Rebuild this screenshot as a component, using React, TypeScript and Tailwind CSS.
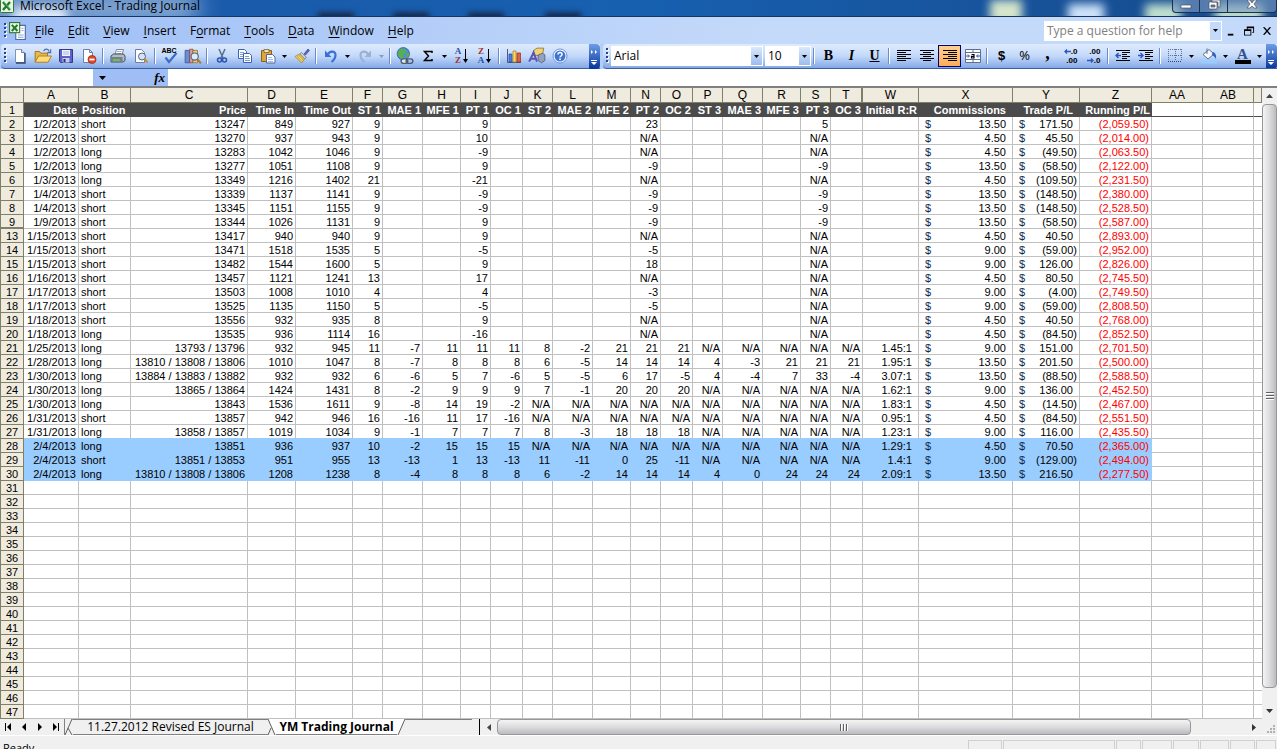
import type { ReactNode } from 'react';

import clsx from 'clsx';

type Entry = [
  row: number,
  date: string,
  position: string,
  price: string,
  timeIn: string,
  timeOut: string,
  stats: string,
  ratio: string,
  commission: string,
  trade: string,
  running: string,
];

const styles = {
  ui: "font-['Open_Sans','Noto_Sans',sans-serif]",
  sheet: "font-['Liberation_Sans',Arial,sans-serif]",
  headCell: 'border-r border-b border-[#808069] bg-[#efebde] p-0 font-normal',
  toolbar:
    'flex h-[25px] items-center border-b border-[#3b619c] bg-linear-to-b from-[#dfebfd] via-[#c3d9fa] to-[#84a8e6]',
  overflow:
    'flex h-[25px] w-[11px] shrink-0 flex-col items-center justify-end gap-1 rounded-r-sm bg-linear-to-b from-[#6f9de6] to-[#04349a] pb-[3px]',
  decimals:
    "flex flex-col items-end font-['Liberation_Sans',sans-serif] text-[8px] leading-[9px] font-bold",
} as const;

const COLUMNS = [
  { id: 'A', width: 'w-[55px]', title: 'Date' },
  { id: 'B', width: 'w-[52px]', title: 'Position' },
  { id: 'C', width: 'w-[117px]', title: 'Price' },
  { id: 'D', width: 'w-[48px]', title: 'Time In' },
  { id: 'E', width: 'w-[57px]', title: 'Time Out' },
  { id: 'F', width: 'w-[30px]', title: 'ST 1' },
  { id: 'G', width: 'w-[40px]', title: 'MAE 1' },
  { id: 'H', width: 'w-[38px]', title: 'MFE 1' },
  { id: 'I', width: 'w-[30px]', title: 'PT 1' },
  { id: 'J', width: 'w-[32px]', title: 'OC 1' },
  { id: 'K', width: 'w-[30px]', title: 'ST 2' },
  { id: 'L', width: 'w-[40px]', title: 'MAE 2' },
  { id: 'M', width: 'w-[38px]', title: 'MFE 2' },
  { id: 'N', width: 'w-[30px]', title: 'PT 2' },
  { id: 'O', width: 'w-[32px]', title: 'OC 2' },
  { id: 'P', width: 'w-[30px]', title: 'ST 3' },
  { id: 'Q', width: 'w-[40px]', title: 'MAE 3' },
  { id: 'R', width: 'w-[38px]', title: 'MFE 3' },
  { id: 'S', width: 'w-[30px]', title: 'PT 3' },
  { id: 'T', width: 'w-[32px]', title: 'OC 3' },
  { id: 'W', width: 'w-[56px]', title: 'Initial R:R' },
  { id: 'X', width: 'w-[94px]', title: 'Commissions' },
  { id: 'Y', width: 'w-[67px]', title: 'Trade P/L' },
  { id: 'Z', width: 'w-[72px]', title: 'Running P/L' },
  { id: 'AA', width: 'w-[51px]', title: '' },
  { id: 'AB', width: 'w-[51px]', title: '' },
  { id: '', width: 'w-auto', title: '' },
];

// stats holds columns F to T, a dot is an empty cell
const ENTRIES: Entry[] = [
  [2, '1/2/2013', 'short', '13247', '849', '927', '9 . . 9 . . . . 23 . . . . 5 .', '', '13.50', '171.50', '(2,059.50)'],
  [3, '1/2/2013', 'short', '13270', '937', '943', '9 . . 10 . . . . N/A . . . . N/A .', '', '4.50', '45.50', '(2,014.00)'],
  [4, '1/2/2013', 'long', '13283', '1042', '1046', '9 . . -9 . . . . N/A . . . . N/A .', '', '4.50', '(49.50)', '(2,063.50)'],
  [5, '1/2/2013', 'long', '13277', '1051', '1108', '9 . . 9 . . . . -9 . . . . -9 .', '', '13.50', '(58.50)', '(2,122.00)'],
  [6, '1/3/2013', 'long', '13349', '1216', '1402', '21 . . -21 . . . . N/A . . . . N/A .', '', '4.50', '(109.50)', '(2,231.50)'],
  [7, '1/4/2013', 'short', '13339', '1137', '1141', '9 . . -9 . . . . -9 . . . . -9 .', '', '13.50', '(148.50)', '(2,380.00)'],
  [8, '1/4/2013', 'short', '13345', '1151', '1155', '9 . . -9 . . . . -9 . . . . -9 .', '', '13.50', '(148.50)', '(2,528.50)'],
  [9, '1/9/2013', 'short', '13344', '1026', '1131', '9 . . 9 . . . . -9 . . . . -9 .', '', '13.50', '(58.50)', '(2,587.00)'],
  [13, '1/15/2013', 'short', '13417', '940', '940', '9 . . 9 . . . . N/A . . . . N/A .', '', '4.50', '40.50', '(2,893.00)'],
  [14, '1/15/2013', 'short', '13471', '1518', '1535', '5 . . -5 . . . . -5 . . . . N/A .', '', '9.00', '(59.00)', '(2,952.00)'],
  [15, '1/15/2013', 'short', '13482', '1544', '1600', '5 . . 9 . . . . 18 . . . . N/A .', '', '9.00', '126.00', '(2,826.00)'],
  [16, '1/16/2013', 'short', '13457', '1121', '1241', '13 . . 17 . . . . N/A . . . . N/A .', '', '4.50', '80.50', '(2,745.50)'],
  [17, '1/17/2013', 'short', '13503', '1008', '1010', '4 . . 4 . . . . -3 . . . . N/A .', '', '9.00', '(4.00)', '(2,749.50)'],
  [18, '1/17/2013', 'short', '13525', '1135', '1150', '5 . . -5 . . . . -5 . . . . N/A .', '', '9.00', '(59.00)', '(2,808.50)'],
  [19, '1/18/2013', 'short', '13556', '932', '935', '8 . . 9 . . . . N/A . . . . N/A .', '', '4.50', '40.50', '(2,768.00)'],
  [20, '1/18/2013', 'long', '13535', '936', '1114', '16 . . -16 . . . . N/A . . . . N/A .', '', '4.50', '(84.50)', '(2,852.50)'],
  [21, '1/25/2013', 'long', '13793 / 13796', '932', '945', '11 -7 11 11 11 8 -2 21 21 21 N/A N/A N/A N/A N/A', '1.45:1', '9.00', '151.00', '(2,701.50)'],
  [22, '1/28/2013', 'long', '13810 / 13808 / 13806', '1010', '1047', '8 -7 8 8 8 6 -5 14 14 14 4 -3 21 21 21', '1.95:1', '13.50', '201.50', '(2,500.00)'],
  [23, '1/30/2013', 'long', '13884 / 13883 / 13882', '932', '932', '6 -6 5 7 -6 5 -5 6 17 -5 4 -4 7 33 -4', '3.07:1', '13.50', '(88.50)', '(2,588.50)'],
  [24, '1/30/2013', 'long', '13865 / 13864', '1424', '1431', '8 -2 9 9 9 7 -1 20 20 20 N/A N/A N/A N/A N/A', '1.62:1', '9.00', '136.00', '(2,452.50)'],
  [25, '1/30/2013', 'long', '13843', '1536', '1611', '9 -8 14 19 -2 N/A N/A N/A N/A N/A N/A N/A N/A N/A N/A', '1.83:1', '4.50', '(14.50)', '(2,467.00)'],
  [26, '1/31/2013', 'short', '13857', '942', '946', '16 -16 11 17 -16 N/A N/A N/A N/A N/A N/A N/A N/A N/A N/A', '0.95:1', '4.50', '(84.50)', '(2,551.50)'],
  [27, '1/31/2013', 'long', '13858 / 13857', '1019', '1034', '9 -1 7 7 7 8 -3 18 18 18 N/A N/A N/A N/A N/A', '1.23:1', '9.00', '116.00', '(2,435.50)'],
  [28, '2/4/2013', 'long', '13851', '936', '937', '10 -2 15 15 15 N/A N/A N/A N/A N/A N/A N/A N/A N/A N/A', '1.29:1', '4.50', '70.50', '(2,365.00)'],
  [29, '2/4/2013', 'short', '13851 / 13853', '951', '955', '13 -13 1 13 -13 11 -11 0 25 -11 N/A N/A N/A N/A N/A', '1.4:1', '9.00', '(129.00)', '(2,494.00)'],
  [30, '2/4/2013', 'long', '13810 / 13808 / 13806', '1208', '1238', '8 -4 8 8 8 6 -2 14 14 14 4 0 24 24 24', '2.09:1', '13.50', '216.50', '(2,277.50)'],
];

const EMPTY_ROWS = Array.from({ length: 17 }, (_, i) => 31 + i);

const MENUS = [
  ['', 'F', 'ile'],
  ['', 'E', 'dit'],
  ['', 'V', 'iew'],
  ['', 'I', 'nsert'],
  ['F', 'o', 'rmat'],
  ['', 'T', 'ools'],
  ['', 'D', 'ata'],
  ['', 'W', 'indow'],
  ['', 'H', 'elp'],
];

function Icon({ children, size = 16 }: { children: ReactNode; size?: 16 | 18 }) {
  return (
    <svg viewBox="0 0 16 16" width={size} height={size} fill="none" aria-hidden="true">
      {children}
    </svg>
  );
}

function ToolButton({
  label,
  active,
  children,
}: {
  label: string;
  active?: boolean;
  children: ReactNode;
}) {
  return (
    <button
      type="button"
      aria-label={label}
      className={clsx(
        'flex h-[22px] w-[23px] shrink-0 items-center justify-center',
        active && 'border border-[#000080] bg-linear-to-b from-[#ffd091] to-[#ffac58]'
      )}
    >
      {children}
    </button>
  );
}

function Caret({ className = 'fill-black' }: { className?: string }) {
  return (
    <svg viewBox="0 0 5 3" width="5" height="3" className={className} aria-hidden="true">
      <path d="M0 0h5L2.500 3z" />
    </svg>
  );
}

function DropArrow({ label, disabled }: { label: string; disabled?: boolean }) {
  return (
    <button
      type="button"
      aria-label={label}
      disabled={disabled}
      className="flex h-[22px] w-[11px] shrink-0 items-center justify-center"
    >
      <Caret className={disabled ? 'fill-[#8a9ab8]' : 'fill-black'} />
    </button>
  );
}

function Separator() {
  return (
    <div className="flex w-[6px] shrink-0 justify-center">
      <div className="h-4 w-px bg-[#6a8ccb]" />
      <div className="h-4 w-px bg-white" />
    </div>
  );
}

function Grip() {
  return (
    <svg viewBox="0 0 4 16" width="4" height="16" className="shrink-0" aria-hidden="true">
      {[0, 4, 8, 12].map((y) => (
        <g key={y}>
          <rect x="1" y={y + 1} width="2" height="2" fill="#fff" />
          <rect x="0" y={y} width="2" height="2" fill="#27418a" />
        </g>
      ))}
    </svg>
  );
}

function Overflow() {
  return (
    <button type="button" aria-label="Toolbar options" className={styles.overflow}>
      <svg viewBox="0 0 7 16" width="7" height="16" fill="#fff" aria-hidden="true">
        <path d="M0 0l2 2-2 2zM4 0l2 2-2 2zM0 10h6v1H0zM0 12h6l-3 3z" />
      </svg>
    </button>
  );
}

function ExcelLogo() {
  return (
    <>
      <rect x="0.500" y="1.500" width="13" height="13" rx="1" fill="#e9f5e4" stroke="#2c7a2f" />
      <path d="M3 4l7 8M10 4l-7 8" stroke="#1f7a2a" strokeWidth="2.400" />
      <path d="M4 4l7 8" stroke="#8fd08c" strokeWidth="0.700" />
    </>
  );
}

function StandardToolbar() {
  return (
    <div className={clsx(styles.toolbar, 'w-[599px] shrink-0 rounded-l-sm pl-[3px]')}>
      <Grip />
      <ToolButton label="New">
        <Icon>
          <path d="M3.500 1.500h6l3 3v10h-9z" fill="#fff" stroke="#7f93bb" />
          <path d="M13 5v10H4" stroke="#33466e" strokeWidth="1.300" />
          <path d="M9.500 1.500v3h3" stroke="#6b7fa8" fill="#dbe6f8" />
        </Icon>
      </ToolButton>
      <ToolButton label="Open">
        <Icon size={18}>
          <path d="M1 4h4l1 1.500h6V13H1z" fill="#e8b84a" stroke="#9c6f17" strokeWidth="0.800" />
          <path d="M1 13.500L4 8h11.500L12.500 13.500z" fill="#ffdc78" stroke="#a87a1c" strokeWidth="0.800" />
          <path d="M8.500 3.500c1.500-2.500 4-2 5 .5M14.800 2v3h-3" stroke="#4a6da8" />
        </Icon>
      </ToolButton>
      <ToolButton label="Save">
        <Icon>
          <path d="M1.500 1.500h13v13h-12l-1-1z" fill="#5d62c8" stroke="#34388f" />
          <path d="M4 2h8v6H4z" fill="#eef2ff" />
          <path d="M5 4h6M5 6h6" stroke="#aab4dc" />
          <path d="M4.500 10h7v4.500h-7z" fill="#c7cbe8" />
          <path d="M5.500 11h2v3h-2z" fill="#2b2e80" />
        </Icon>
      </ToolButton>
      <ToolButton label="Permission">
        <Icon>
          <path d="M2.500 1.500h6l3 3v10h-9z" fill="#fff" stroke="#6b7fa8" />
          <path d="M8.500 1.500v3h3" stroke="#6b7fa8" />
          <circle cx="11" cy="11.500" r="4" fill="#e0492c" stroke="#a8260f" strokeWidth="0.800" />
          <path d="M8.500 11.500h5" stroke="#fff" strokeWidth="1.800" />
        </Icon>
      </ToolButton>
      <Separator />
      <ToolButton label="Print">
        <Icon>
          <path d="M5 7l1.500-5.500h7L12 7z" fill="#fff" stroke="#5d6b82" strokeWidth="0.800" />
          <path d="M7 3.500h4.500M6.500 5.500H11" stroke="#8aa0c8" strokeWidth="0.800" />
          <path d="M1 8l2.500-2h10l1.500 2v4.500l-2 1.500H1z" fill="#b4bcc6" stroke="#39434f" strokeWidth="0.900" />
          <path d="M1 9h11.500v4.500H1z" fill="#75808e" />
          <path d="M3 11h7v2H3z" fill="#6fc04a" />
        </Icon>
      </ToolButton>
      <ToolButton label="Print Preview">
        <Icon>
          <path d="M2.500 1.500h6l3 3v10h-9z" fill="#fff" stroke="#6b7fa8" />
          <circle cx="9" cy="8.500" r="3.500" fill="#cfe6fa" stroke="#53657f" />
          <path d="M11.500 11l3 3.500" stroke="#d08c2a" strokeWidth="2" />
        </Icon>
      </ToolButton>
      <Separator />
      <ToolButton label="Spelling">
        <span className="relative flex size-4">
          <span className="absolute -top-px left-0 font-['Liberation_Sans',sans-serif] text-[7px] leading-[8px] font-bold">
            ABC
          </span>
          <Icon>
            <path d="M3.500 9.500l3.500 4.500L14.500 5" stroke="#3c6cc8" strokeWidth="2.200" />
          </Icon>
        </span>
      </ToolButton>
      <ToolButton label="Research">
        <Icon size={18}>
          <path d="M1 3h4v11H1z" fill="#6a8ed6" stroke="#33518f" strokeWidth="0.700" />
          <path d="M5 2h3v12H5z" fill="#dba0a0" stroke="#8a4242" strokeWidth="0.700" />
          <path d="M8 3h4v11H8z" fill="#e6cf7a" stroke="#8a7434" strokeWidth="0.700" />
          <circle cx="9.500" cy="8.500" r="3.200" fill="#dcecfb" stroke="#53657f" />
          <path d="M12 11l3 3.500" stroke="#b87526" strokeWidth="1.800" />
        </Icon>
      </ToolButton>
      <Separator />
      <ToolButton label="Cut">
        <Icon>
          <path d="M5 1l4 9M11 1L7 10" stroke="#5a6e94" strokeWidth="1.500" />
          <circle cx="5.500" cy="12" r="2" stroke="#2c55b0" strokeWidth="1.500" />
          <circle cx="10.500" cy="12" r="2" stroke="#2c55b0" strokeWidth="1.500" />
        </Icon>
      </ToolButton>
      <ToolButton label="Copy">
        <Icon>
          <path d="M1.500 1.500h6l2 2v7h-8z" fill="#fff" stroke="#3f63ad" />
          <path d="M3 4.500h4M3 6.500h4M3 8.500h3" stroke="#7e9bd6" />
          <path d="M6.500 5.500h6l2 2v7h-8z" fill="#fff" stroke="#3f63ad" />
          <path d="M8 8.500h4M8 10.500h5M8 12.500h5" stroke="#7e9bd6" />
        </Icon>
      </ToolButton>
      <ToolButton label="Paste">
        <Icon>
          <path d="M1.500 2.500h10v11h-10z" fill="#e0a53a" stroke="#8f6014" />
          <path d="M4 1.500h5v3H4z" fill="#f5e6b0" stroke="#77643a" strokeWidth="0.800" />
          <path d="M6.500 6.500h6l2.500 2.500v6H6.500z" fill="#fff" stroke="#4d68a3" />
          <path d="M8 9.500h4M8 11.500h5M8 13.500h5" stroke="#8ca6d8" strokeWidth="0.800" />
        </Icon>
      </ToolButton>
      <DropArrow label="Paste options" />
      <ToolButton label="Format Painter">
        <Icon>
          <path d="M10 6l4-5 1.500 1.500L11.500 7z" fill="#5c6bc0" stroke="#38458f" strokeWidth="0.700" />
          <path d="M7.500 4.500l5 5-2 1.500-5-5z" fill="#c9ced8" stroke="#6a7080" strokeWidth="0.700" />
          <path d="M5.500 6l5 5-3 4L1 8.500z" fill="#f0d468" stroke="#9a7c22" strokeWidth="0.700" />
          <path d="M3 8l5 5.500M4.500 7l5 5" stroke="#b8923a" strokeWidth="0.700" />
        </Icon>
      </ToolButton>
      <Separator />
      <ToolButton label="Undo">
        <Icon>
          <path d="M2 2.500V9h6.500z" fill="#3c6fd4" />
          <path d="M4.500 7C6 3 12.500 2 12.500 7c0 3-1.500 5-4 7" stroke="#3c6fd4" strokeWidth="2.200" />
        </Icon>
      </ToolButton>
      <DropArrow label="Undo history" />
      <ToolButton label="Redo">
        <Icon>
          <path d="M14 2.500V9H7.500z" fill="#9cb1d6" />
          <path d="M11.500 7C10 3 3.500 2 3.500 7c0 3 1.500 5 4 7" stroke="#9cb1d6" strokeWidth="2.200" />
        </Icon>
      </ToolButton>
      <DropArrow label="Redo history" disabled />
      <Separator />
      <ToolButton label="Insert Hyperlink">
        <Icon size={18}>
          <circle cx="6.500" cy="6" r="5.500" fill="#4f8fd8" stroke="#2e5c9c" strokeWidth="0.700" />
          <path d="M3 2.500c2-1.500 5-1 6 .5L8 6 6 7l1 2.500-2.500 1C1.500 9 1 5 3 2.500zM9 6l2.500-1c.5 2-.5 4-2 5z" fill="#58b04a" />
          <rect x="4.500" y="10.500" width="6" height="4" rx="2" stroke="#4d5a70" strokeWidth="1.200" fill="#dfe6f0" />
          <rect x="9" y="10.500" width="6" height="4" rx="2" stroke="#4d5a70" strokeWidth="1.200" />
        </Icon>
      </ToolButton>
      <ToolButton label="AutoSum">
        <Icon>
          <path d="M12 5V3.500H4.500L8.500 8l-4 4.500H12V11" stroke="#000" strokeWidth="1.500" />
        </Icon>
      </ToolButton>
      <DropArrow label="AutoSum functions" />
      {[
        { label: 'Sort Ascending', top: 'A', bottom: 'Z' },
        { label: 'Sort Descending', top: 'Z', bottom: 'A' },
      ].map((sort) => (
        <ToolButton key={sort.label} label={sort.label}>
          <span className="flex w-2 flex-col font-['Liberation_Serif',serif] text-[9px] leading-[9px] font-bold">
            <span className={sort.top === 'A' ? 'text-[#2c4fa8]' : 'text-[#a33232]'}>{sort.top}</span>
            <span className={sort.top === 'A' ? 'text-[#a33232]' : 'text-[#2c4fa8]'}>{sort.bottom}</span>
          </span>
          <svg viewBox="0 0 7 16" width="7" height="16" aria-hidden="true">
            <path d="M3 1h1v10h2l-2.500 4L1 11h2z" />
          </svg>
        </ToolButton>
      ))}
      <Separator />
      <ToolButton label="Chart Wizard">
        <Icon>
          <path d="M1.500 1v13.500H15" stroke="#4b5b78" />
          <path d="M3 6h3v8H3z" fill="#4f7fe0" stroke="#2446a0" strokeWidth="0.700" />
          <path d="M7 3h3v11H7z" fill="#ffd75c" stroke="#a87a1c" strokeWidth="0.700" />
          <path d="M11 5h3.500v9H11z" fill="#e2603a" stroke="#952c10" strokeWidth="0.700" />
        </Icon>
      </ToolButton>
      <ToolButton label="Drawing">
        <Icon size={18}>
          <path d="M5 3l3-2h6l-1 5-3 1.500H4z" fill="#f2d274" stroke="#8c7020" strokeWidth="0.700" />
          <path d="M9 7l4-1.500L15 7v5l-3 2-3-2z" fill="#93a2ba" stroke="#4e5a70" strokeWidth="0.700" />
          <path d="M1 13L5 5l3 8M2.500 10.500h4.500" stroke="#5b55b8" strokeWidth="1.800" />
        </Icon>
      </ToolButton>
      <ToolButton label="Help">
        <Icon>
          <circle cx="8" cy="8" r="7" fill="#fff" stroke="#6a93d8" />
          <circle cx="8" cy="8" r="5.500" fill="#3f76d4" />
          <path d="M6 6.500c0-2.700 4-2.700 4 0 0 1.500-2 1.500-2 3" stroke="#fff" strokeWidth="1.500" />
          <rect x="7.200" y="10.500" width="1.600" height="1.600" fill="#fff" />
        </Icon>
      </ToolButton>
      <div className="flex-1" />
      <Overflow />
    </div>
  );
}

function Combo({ label, value, width }: { label: string; value: string; width: string }) {
  return (
    <div className={clsx('relative flex h-5 shrink-0 border border-white bg-white', width)}>
      <select
        aria-label={label}
        defaultValue={value}
        className="min-w-0 flex-1 appearance-none bg-white pr-3 pl-[2px] text-xs leading-4 outline-none"
      >
        <option>{value}</option>
      </select>
      <span className="pointer-events-none absolute inset-y-0 right-0 flex w-[11px] items-center justify-center bg-linear-to-b from-[#dbe8fb] to-[#9dbcee]">
        <Caret />
      </span>
    </div>
  );
}

function Lines({ d }: { d: string }) {
  return (
    <Icon>
      <path d={d} stroke="#000" />
    </Icon>
  );
}

function DecimalArrow({ d }: { d: string }) {
  return (
    <svg viewBox="0 0 7 5" width="7" height="5" fill="none" aria-hidden="true">
      <path d={d} stroke="#2c55c0" strokeWidth="1.300" />
    </svg>
  );
}

function FormattingToolbar() {
  return (
    <div className={clsx(styles.toolbar, 'min-w-0 flex-1 overflow-hidden rounded-l-sm pl-[3px]')}>
      <Grip />
      <div className="flex shrink-0 gap-[2px] pl-px">
        <Combo label="Font" value="Arial" width="w-[152px]" />
        <Combo label="Font size" value="10" width="w-[46px]" />
      </div>
      <Separator />
      <ToolButton label="Bold">
        <span className="font-['Liberation_Serif',serif] text-sm font-black">B</span>
      </ToolButton>
      <ToolButton label="Italic">
        <span className="font-['Liberation_Serif',serif] text-sm font-bold italic">I</span>
      </ToolButton>
      <ToolButton label="Underline">
        <span className="font-['Liberation_Serif',serif] text-sm font-bold underline">U</span>
      </ToolButton>
      <Separator />
      <ToolButton label="Align Left">
        <Lines d="M1 2.500h14M1 4.500h9M1 6.500h14M1 8.500h9M1 10.500h14M1 12.500h9" />
      </ToolButton>
      <ToolButton label="Center">
        <Lines d="M1 2.500h14M4 4.500h8M1 6.500h14M4 8.500h8M1 10.500h14M4 12.500h8" />
      </ToolButton>
      <ToolButton label="Align Right" active>
        <Lines d="M1 2.500h14M6 4.500h9M1 6.500h14M6 8.500h9M1 10.500h14M6 12.500h9" />
      </ToolButton>
      <ToolButton label="Merge and Center">
        <Icon>
          <path d="M0.500 1.500h15v13h-15z" fill="#fff" stroke="#5e6f90" />
          <path d="M0.500 4.500h15M0.500 11.500h15M8 1.500v3M8 11.500v3" stroke="#5e6f90" />
          <path d="M1 8h3M15 8h-3M3 6.500L4.500 8 3 9.500M13 6.500L11.500 8l1.500 1.500" stroke="#2a4fa8" />
          <path d="M6.500 6.500h2.500v3.500H6.500V8.300H9" stroke="#000" strokeWidth="1.200" />
        </Icon>
      </ToolButton>
      <Separator />
      <ToolButton label="Currency Style">
        <span className="font-['Liberation_Sans',sans-serif] text-[13px] font-bold">$</span>
      </ToolButton>
      <ToolButton label="Percent Style">
        <span className="text-[13px]">%</span>
      </ToolButton>
      <ToolButton label="Comma Style">
        <span className="self-start font-['Liberation_Serif',serif] text-lg leading-4 font-bold">,</span>
      </ToolButton>
      <ToolButton label="Increase Decimal">
        <span className={styles.decimals}>
          <span className="flex items-center">
            <DecimalArrow d="M7 2.500H1M3 0.500L1 2.500l2 2" />
            .0
          </span>
          <span>.00</span>
        </span>
      </ToolButton>
      <ToolButton label="Decrease Decimal">
        <span className={styles.decimals}>
          <span>.00</span>
          <span className="flex items-center">
            <DecimalArrow d="M0 2.500h6M4 0.500l2 2-2 2" />
            .0
          </span>
        </span>
      </ToolButton>
      <Separator />
      <ToolButton label="Decrease Indent">
        <Icon>
          <path d="M1 2.500h14M7 4.500h8M7 6.500h5M7 8.500h8M7 10.500h5M1 12.500h14" stroke="#000" />
          <path d="M6 7.500H1.500M3.500 5L1 7.500 3.500 10" stroke="#2c55c0" strokeWidth="1.400" />
        </Icon>
      </ToolButton>
      <ToolButton label="Increase Indent">
        <Icon>
          <path d="M1 2.500h14M7 4.500h8M7 6.500h5M7 8.500h8M7 10.500h5M1 12.500h14" stroke="#000" />
          <path d="M0 7.500h4.500M2.500 5L5 7.500 2.500 10" stroke="#2c55c0" strokeWidth="1.400" />
        </Icon>
      </ToolButton>
      <Separator />
      <ToolButton label="Borders">
        <Icon>
          <path
            d="M1 1.500h14M1 7.500h14M1.500 1v12M8.500 1v12M14.500 1v12"
            stroke="#5e6f90"
            strokeDasharray="1 1"
          />
          <path d="M1 13.500h14" stroke="#33415e" strokeDasharray="1 1" />
        </Icon>
      </ToolButton>
      <DropArrow label="Border styles" />
      <ToolButton label="Fill Color">
        <Icon>
          <path d="M2 6.500l6-5 5 4.500-6 5z" fill="#f4f7fc" stroke="#5e6f90" />
          <path d="M6 0.500v5.500" stroke="#5e6f90" />
          <path d="M11.500 4c3 .5 4 3 3.500 7-1-1-1.500-3-4-4z" fill="#2c62c4" />
          <path d="M0 12h16v3.500H0z" fill="#99ccff" />
        </Icon>
      </ToolButton>
      <DropArrow label="Fill colors" />
      <ToolButton label="Font Color">
        <span className="flex h-4 w-4 flex-col items-center border-b-4 border-black font-['Liberation_Serif',serif] text-[15px] leading-3 font-bold text-[#33508f]">
          A
        </span>
      </ToolButton>
      <DropArrow label="Font colors" />
      <div className="flex-1" />
      <Overflow />
    </div>
  );
}

function TitleBar() {
  return (
    <header className="relative flex h-[17px] shrink-0 items-start justify-between overflow-hidden border-b border-[#17365f] bg-linear-to-r from-[#1c58a8] via-[#1760b0] to-[#174a8c]">
      <div className="absolute -top-2 -left-6 h-8 w-56 rounded-full bg-[#a9c3e4]/80 blur-md" />
      <div className="absolute top-2 left-3 h-4 w-14 rounded-full bg-[#e4eefa] blur-[5px]" />
      <div className="absolute top-0 left-[990px] h-6 w-8 bg-[#d6e6cc] blur-[5px]" />
      <div className="absolute top-1 left-[1068px] h-5 w-9 bg-[#cfe4fa] blur-[5px]" />
      <div className="absolute top-1 left-[1145px] h-5 w-9 bg-[#bfe0cf] blur-[5px]" />
      <div className="absolute top-1 left-[1215px] h-5 w-12 bg-[#bcdccb] blur-[5px]" />
      {['left-[318px]', 'left-[393px]', 'left-[468px]', 'left-[545px]'].map((left) => (
        <div key={left} className={clsx('absolute top-[13px] h-2 w-9 bg-[#14213f] blur-[3px]', left)} />
      ))}
      <div className="relative flex items-start gap-1">
        <span className="-mt-[2px] block">
          <Icon>
            <ExcelLogo />
          </Icon>
        </span>
        <h1 className="text-xs leading-3">Microsoft Excel - Trading Journal</h1>
      </div>
      <div className="relative flex h-[13px] rounded-b border border-t-0 border-[#1b2f4e] bg-[#7d9cc4]/60">
        {[
          ['Minimize', 'M3 5h10v3H3z', 'w-[27px]'],
          ['Restore', 'M6 0h8v7h-2V2H6zM3 2h8v7H3zm2 3v2h4V5z', 'w-[28px]'],
          ['Close', 'M3 0h3l2 3 2-3h3l-3 4 3 4h-3L8 6 6 8H3l3-4z', 'w-[48px]'],
        ].map(([label, d, width]) => (
          <button
            key={label}
            type="button"
            aria-label={label}
            className={clsx(
              'flex items-start justify-center border-r border-[#1b2f4e] last:border-r-0',
              width
            )}
          >
            <svg viewBox="0 0 16 12" width="16" height="12" aria-hidden="true">
              <path d={d} fill="#fff" stroke="#4a4f5c" strokeWidth="0.700" fillRule="evenodd" />
            </svg>
          </button>
        ))}
      </div>
    </header>
  );
}

function MenuBar() {
  return (
    <div className="flex h-[27px] shrink-0 items-center bg-linear-to-r from-[#9ebef5] to-[#c4dafa] to-60% pr-1 pl-1">
      <Grip />
      <span className="ml-px">
        <Icon size={18}>
          <path d="M6 3h8.500v12.500H6z" fill="#fff" stroke="#4d68a3" />
          <path d="M8 11.500h5M8 13.500h5M11 5.500h2M11 7.500h2" stroke="#8ca6d8" />
          <rect x="0.500" y="0.500" width="9" height="9" fill="#e9f5e4" stroke="#2c7a2f" />
          <path d="M2.500 2.500l5 5.500M7.500 2.500l-5 5.500" stroke="#1f7a2a" strokeWidth="1.800" />
        </Icon>
      </span>
      <nav className="flex flex-1 gap-[14px] pl-2">
        {MENUS.map(([before, key, after]) => (
          <button key={key + after} type="button" className="text-xs leading-4">
            {before}
            <span className="underline underline-offset-2">{key}</span>
            {after}
          </button>
        ))}
      </nav>
      <div className="flex h-5 w-[178px] border border-white bg-white">
        <input
          type="text"
          aria-label="Type a question for help"
          placeholder="Type a question for help"
          className="min-w-0 flex-1 pl-[2px] text-xs leading-4 outline-none placeholder:text-[#808080]"
        />
        <button
          type="button"
          aria-label="Recent questions"
          className="flex w-[11px] items-center justify-center bg-[#c4dafa]"
        >
          <Caret />
        </button>
      </div>
      <div className="flex items-center gap-[7px] pl-1">
        {[
          ['Minimize workbook', 'M2 9h6v2H2z'],
          ['Restore workbook', 'M3 1h8v7H9V7h1V3H4v1H3zM0 4h8v7H0zm1 2v4h6V6z'],
          ['Close workbook', 'M1 2h2l2.500 3L8 2h2L6.500 6 10 10H8L5.500 7 3 10H1l3.500-4z'],
        ].map(([label, d]) => (
          <button key={label} type="button" aria-label={label}>
            <svg viewBox="0 0 12 12" width="11" height="12" aria-hidden="true">
              <path d={d} fillRule="evenodd" />
            </svg>
          </button>
        ))}
      </div>
    </div>
  );
}

function FormulaBar() {
  return (
    <div className="flex h-[17px] shrink-0 bg-white">
      <input type="text" aria-label="Name box" className="w-[93px] bg-white px-1 text-xs outline-none" />
      <div className="flex w-[75px] items-center justify-between bg-[#9ebef5] pr-[3px] pl-[6px]">
        <button type="button" aria-label="Named ranges">
          <svg viewBox="0 0 7 4" width="7" height="4" aria-hidden="true">
            <path d="M0 0h7L3.500 4z" />
          </svg>
        </button>
        <button
          type="button"
          aria-label="Insert function"
          className="font-['Liberation_Serif',serif] text-[13px] leading-4 font-bold italic"
        >
          fx
        </button>
      </div>
      <input type="text" aria-label="Formula" className="min-w-0 flex-1 bg-white px-1 text-xs outline-none" />
    </div>
  );
}

function Money({ value }: { value: string }) {
  return (
    <span className={clsx('flex justify-between pl-1', value.startsWith('(') ? '' : 'pr-1')}>
      <span className="text-[#0c2a52]">$</span>
      <span>{value}</span>
    </span>
  );
}

function RowNumber({ row }: { row: number }) {
  return (
    <th
      scope="row"
      className={clsx(
        styles.headCell,
        'h-[14px] border-l pt-px text-center',
        // rows 10 to 12 are hidden
        row === 9 && 'shadow-[inset_0_-1px_0_#808069]'
      )}
    >
      {row}
    </th>
  );
}

function EntryRow({ entry }: { entry: Entry }) {
  const [row, date, position, price, timeIn, timeOut, stats, ratio, commission, trade, running] =
    entry;
  const marked = row >= 28;
  const cells = [date, position, price, timeIn, timeOut, ...stats.split(' ')];
  const cell = clsx(
    'h-[14px] border-r border-b px-[2px] pt-px pb-0',
    marked ? 'border-[#99ccff] bg-[#99ccff]' : 'border-[#c0c0c0]',
    row === 27 && 'border-b-[#99ccff]'
  );
  const blank = 'border-r border-b border-[#c0c0c0] p-0';

  return (
    <tr>
      <RowNumber row={row} />
      {cells.map((value, i) => (
        <td key={COLUMNS[i].id} className={clsx(cell, i === 1 ? 'text-left' : 'text-right')}>
          {value === '.' ? '' : value}
        </td>
      ))}
      <td className={clsx(cell, 'text-right')}>
        <span className="pr-1">{ratio}</span>
      </td>
      <td className={cell}>
        <Money value={commission} />
      </td>
      <td className={cell}>
        <Money value={trade} />
      </td>
      <td className={clsx(cell, 'text-right text-[#ff0000]')}>{running}</td>
      <td className={blank} />
      <td className={blank} />
      <td className="border-b border-[#c0c0c0] p-0" />
    </tr>
  );
}

function Sheet() {
  return (
    <table
      className={clsx(
        styles.sheet,
        'w-full table-fixed border-separate border-spacing-0 bg-white text-[11px] leading-3 whitespace-nowrap'
      )}
    >
      <colgroup>
        <col className="w-[24px]" />
        {COLUMNS.map((column) => (
          <col key={column.id} className={column.width} />
        ))}
      </colgroup>
      <thead>
        <tr>
          <th className={clsx(styles.headCell, 'h-[15px] border-l')} />
          {COLUMNS.map((column) => (
            <th
              key={column.id}
              scope="col"
              className={clsx(
                styles.headCell,
                'h-[15px] text-xs leading-[14px]',
                column.id === 'T' && 'border-r-2'
              )}
            >
              {column.id}
            </th>
          ))}
        </tr>
      </thead>
      <tbody>
        <tr>
          <RowNumber row={1} />
          {COLUMNS.map((column) => (
            <td
              key={column.id}
              className={clsx(
                'h-[14px] border-b border-[#4b4b4b] pt-px pb-0 font-bold text-white',
                column.title ? 'bg-[#4b4b4b]' : 'border-r border-r-[#c0c0c0] last:border-r-0',
                column.id === 'B' ? 'pl-[3px] text-left' : 'pl-0 text-right',
                column.id === 'X' || column.id === 'Y' ? 'pr-[7px]' : 'pr-[2px]'
              )}
            >
              {column.title}
            </td>
          ))}
        </tr>
        {ENTRIES.map((entry) => (
          <EntryRow key={entry[0]} entry={entry} />
        ))}
        {EMPTY_ROWS.map((row) => (
          <tr key={row}>
            <RowNumber row={row} />
            {COLUMNS.map((column) => (
              <td
                key={column.id}
                className="h-[14px] border-r border-b border-[#c0c0c0] p-0 last:border-r-0"
              />
            ))}
          </tr>
        ))}
      </tbody>
    </table>
  );
}

function VerticalScrollbar() {
  return (
    <div className="flex w-[15px] shrink-0 flex-col bg-[#f0f0f0]">
      <button type="button" aria-label="Scroll up" className="flex h-4 items-center justify-center">
        <svg viewBox="0 0 7 4" width="7" height="4" aria-hidden="true">
          <path d="M0 4h7L3.500 0z" fill="#444" />
        </svg>
      </button>
      <div className="flex flex-1 flex-col items-center justify-center gap-px rounded-sm border border-[#979797] bg-linear-to-r from-[#f4f4f4] via-[#dcdcdf] to-[#bcbcc0]">
        {[0, 1, 2].map((i) => (
          <div key={i} className="h-[2px] w-2 border-b border-white bg-[#606060]" />
        ))}
      </div>
      <button
        type="button"
        aria-label="Scroll down"
        className="flex h-[31px] items-end justify-center pb-[6px]"
      >
        <svg viewBox="0 0 7 4" width="7" height="4" aria-hidden="true">
          <path d="M0 0h7L3.500 4z" fill="#333" />
        </svg>
      </button>
    </div>
  );
}

function SheetTabs() {
  return (
    <div className="flex h-[17px] shrink-0 border-b border-white bg-[#f0f0f0]">
      <div className="flex w-[65px] shrink-0 items-center border-r border-[#808080]">
        {[
          ['First sheet', 'M1 0h1v8H1zM7 0v8L3 4z'],
          ['Previous sheet', 'M6 0v8L2 4z'],
          ['Next sheet', 'M2 0v8l4-4z'],
          ['Last sheet', 'M1 0v8l4-4zM6 0h1v8H6z'],
        ].map(([label, d]) => (
          <button key={label} type="button" aria-label={label} className="flex flex-1 justify-center">
            <svg viewBox="0 0 8 8" width="8" height="8" aria-hidden="true">
              <path d={d} />
            </svg>
          </button>
        ))}
      </div>
      <div className="flex w-[407px] shrink-0">
        <svg viewBox="0 0 8 16" width="8" height="16" className="shrink-0" aria-hidden="true">
          <path d="M0 16L7 0h1M3 9l4 7" fill="none" stroke="#606060" />
        </svg>
        <button
          type="button"
          className="flex w-[195px] items-center justify-center border-y border-[#808080] text-xs leading-[14px]"
        >
          11.27.2012 Revised ES Journal
        </button>
        <svg viewBox="0 0 8 16" width="8" height="16" className="shrink-0" aria-hidden="true">
          <path d="M0 0h8v16H7z" fill="#fff" />
          <path d="M0 0l7 16M0 16l3-7" fill="none" stroke="#606060" />
        </svg>
        <button
          type="button"
          className="flex w-[121px] items-center justify-center border-b border-[#808080] bg-white text-xs leading-[14px] font-bold"
        >
          YM Trading Journal
        </button>
        <svg viewBox="0 0 8 16" width="8" height="16" className="shrink-0" aria-hidden="true">
          <path d="M0 0h8L1 16H0z" fill="#fff" />
          <path d="M1 16L8 0" stroke="#606060" />
        </svg>
        <div className="flex-1 border-t border-[#808080]" />
      </div>
      <div className="w-2 shrink-0 border-r border-black" />
      <button type="button" aria-label="Scroll left" className="flex w-[17px] items-center justify-center">
        <svg viewBox="0 0 4 7" width="4" height="7" aria-hidden="true">
          <path d="M4 0v7L0 3.500z" fill="#444" />
        </svg>
      </button>
      <div className="flex min-w-0 flex-1">
        <div className="flex min-w-0 flex-1 items-center justify-center gap-px rounded-sm border border-[#979797] bg-linear-to-b from-[#f4f4f4] via-[#dcdcdf] to-[#bcbcc0]">
          {[0, 1, 2].map((i) => (
            <div key={i} className="h-[7px] w-[2px] border-r border-white bg-[#606060]" />
          ))}
        </div>
        <button
          type="button"
          aria-label="Scroll right"
          className="flex w-[71px] items-center justify-end pr-[6px]"
        >
          <svg viewBox="0 0 4 7" width="4" height="7" aria-hidden="true">
            <path d="M0 0v7l4-3.500z" fill="#333" />
          </svg>
        </button>
      </div>
      <div className="flex w-[15px] items-end justify-end">
        <svg viewBox="0 0 12 12" width="12" height="12" fill="#b0b0b0" aria-hidden="true">
          <path d="M8 2h2v2H8zM5 5h2v2H5zM8 5h2v2H8zM2 8h2v2H2zM5 8h2v2H5zM8 8h2v2H8z" />
        </svg>
      </div>
    </div>
  );
}

function StatusBar() {
  return (
    <footer className="flex min-h-0 flex-1 justify-between overflow-hidden bg-[#f0f0f0] pt-1">
      <span className="pl-[3px] text-[11px] leading-4">Ready</span>
      <div className="flex gap-px pr-px">
        {[
          'w-[34px]',
          'w-[112px]',
          'w-[25px]',
          'w-[30px]',
          'w-[26px]',
          'w-[29px]',
          'w-[25px]',
          'w-[20px]',
        ].map((width, i) => (
          <div key={i} className={clsx('h-5 border border-[#d0d0d0]', width)} />
        ))}
      </div>
    </footer>
  );
}

export default function App() {
  return (
    <div className={clsx(styles.ui, 'flex h-screen flex-col overflow-hidden bg-white text-black')}>
      <TitleBar />
      <MenuBar />
      <div className="flex shrink-0 gap-[3px] bg-[#b4cef8] pl-px">
        <StandardToolbar />
        <FormattingToolbar />
      </div>
      <FormulaBar />
      <main className="flex shrink-0 border-t-2 border-[#808080]">
        <div className="min-w-0 flex-1 overflow-hidden">
          <Sheet />
        </div>
        <VerticalScrollbar />
      </main>
      <SheetTabs />
      <StatusBar />
    </div>
  );
}
